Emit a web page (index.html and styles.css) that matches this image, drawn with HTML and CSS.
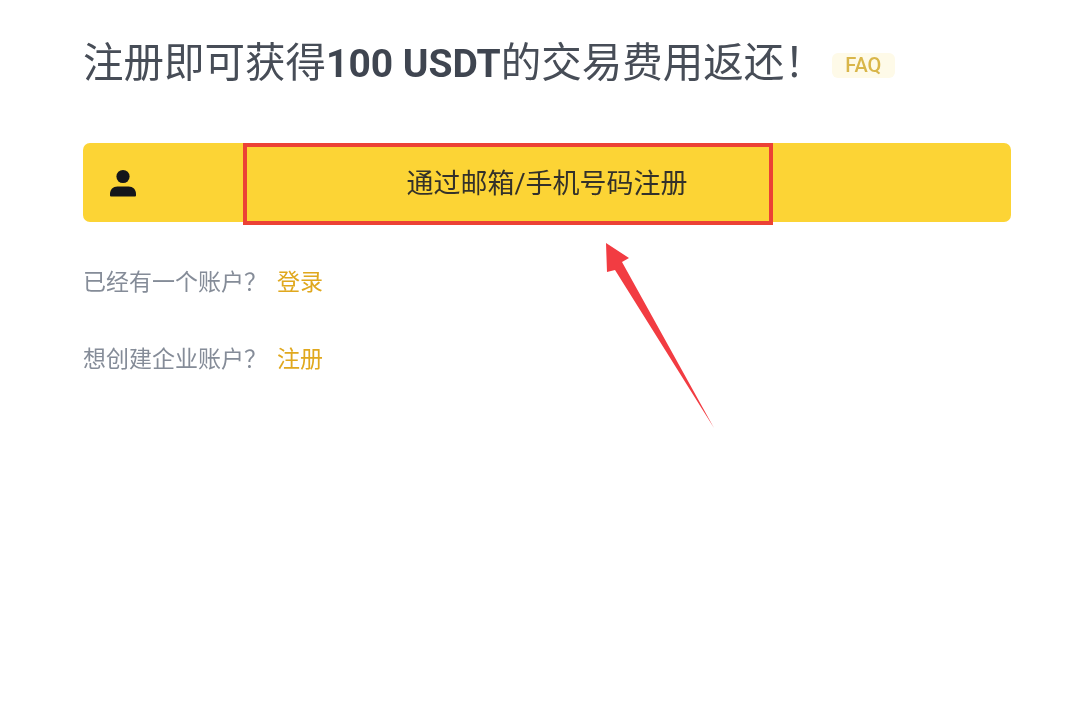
FILE: index.html
```html
<!DOCTYPE html>
<html lang="zh-CN">
<head>
<meta charset="utf-8">
<title>注册</title>
<link rel="stylesheet" href="styles.css">
</head>
<body>
<main class="page">
  <header class="heading">
    <h1 class="title">注册即可获得<b class="num">100 USDT</b>的交易费用返还！</h1>
    <span class="faq">FAQ</span>
  </header>
  <div class="signup">
    <svg class="user" viewBox="0 0 26 26" aria-hidden="true">
      <circle cx="13" cy="6.500" r="6.600"/>
      <path d="M1 26.500Q0 26.500 0 25.500V24C0 19.500 3 16.500 7.500 16.500h11C23 16.500 26 19.500 26 24v1.500Q26 26.500 25 26.500z"/>
    </svg>
    <span class="signup-label">通过邮箱/手机号码注册</span>
    <div class="highlight"></div>
  </div>
  <p class="line first">已经有一个账户？<a class="link">登录</a></p>
  <p class="line second">想创建企业账户？<a class="link">注册</a></p>
</main>
<svg class="arrow" viewBox="0 0 1080 716" aria-hidden="true">
  <path d="M606 243L629 258L622 262L714 428L615 270L607 272Z"/>
</svg>
</body>
</html>
```
FILE: styles.css
```css
* { box-sizing: border-box; }
html, body { margin: 0; height: 100%; background: #fff; overflow: hidden; }
body { position: relative; font-family: Roboto, "Noto Sans CJK SC", sans-serif; }
.page { padding: 35px 69px 0 83px; filter: blur(0.4px); }
.heading { display: flex; align-items: center; height: 56px; }
.title { margin: 0; font-size: 40.5px; line-height: 56px; font-weight: 400; color: #474d57; font-family: Roboto, "Noto Sans CJK SC", sans-serif; white-space: nowrap; }
.num { font-weight: 700; color: #3f4550; font-size: 39px; }
.faq { margin: 4px 0 0 7px; width: 63px; height: 25px; background: #fefae8; border-radius: 6px; color: #d9b64a; font-size: 20px; font-weight: 500; line-height: 25px; text-align: center; }
.signup { position: relative; margin-top: 52px; height: 79px; background: #fcd435; border-radius: 7px; display: flex; align-items: center; justify-content: center; }
.user { position: absolute; left: 27px; top: 27px; width: 26px; height: 26px; fill: #14151a; overflow: visible; }
.signup-label { font-size: 27px; color: #33312a; line-height: 79px; position: relative; top: 2px; }
.highlight { position: absolute; left: 160px; top: 0; width: 530px; height: 82px; border: 4px solid #ec4135; }
.line { margin: 0; font-size: 23px; line-height: 32px; color: #858c98; white-space: nowrap; }
.first { margin-top: 45px; }
.second { margin-top: 45px; }
.link { color: #e0a81e; margin-left: 10px; }
.arrow { position: absolute; left: 0; top: 0; width: 1080px; height: 716px; fill: #f23c42; pointer-events: none; }
```
